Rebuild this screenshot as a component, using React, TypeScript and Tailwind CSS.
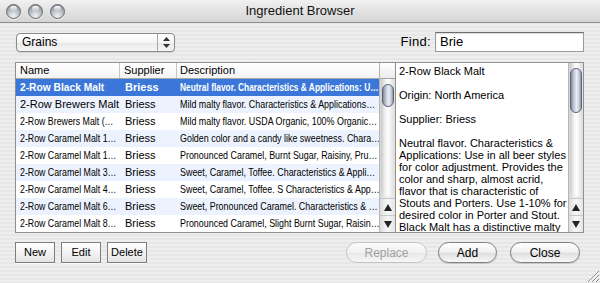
import React from "react";

type Row = { name: string; nameCond?: boolean; desc: string };

const rows: Row[] = [
  { name: "2-Row Black Malt", desc: "Neutral flavor. Characteristics & Applications: U…" },
  { name: "2-Row Brewers Malt", desc: "Mild malty flavor. Characteristics & Applications…" },
  { name: "2-Row Brewers Malt (…", nameCond: true, desc: "Mild malty flavor. USDA Organic, 100% Organic…" },
  { name: "2-Row Caramel Malt 1…", nameCond: true, desc: "Golden color and a candy like sweetness. Chara…" },
  { name: "2-Row Caramel Malt 1…", nameCond: true, desc: "Pronounced Caramel, Burnt Sugar, Raisiny, Pru…" },
  { name: "2-Row Caramel Malt 3…", nameCond: true, desc: "Sweet, Caramel, Toffee. Characteristics & Appli…" },
  { name: "2-Row Caramel Malt 4…", nameCond: true, desc: "Sweet, Caramel, Toffee. S Characteristics & App…" },
  { name: "2-Row Caramel Malt 6…", nameCond: true, desc: "Sweet, Pronounced Caramel. Characteristics & …" },
  { name: "2-Row Caramel Malt 8…", nameCond: true, desc: "Pronounced Caramel, Slight Burnt Sugar, Raisin…" },
];

const detailLines = [
  "2-Row Black Malt",
  "",
  "Origin: North America",
  "",
  "Supplier: Briess",
  "",
  "Neutral flavor. Characteristics &",
  "Applications: Use in all beer styles",
  "for color adjustment. Provides the",
  "color and sharp, almost acrid,",
  "flavor that is characteristic of",
  "Stouts and Porters. Use 1-10% for",
  "desired color in Porter and Stout.",
  "Black Malt has a distinctive malty",
];

function TrafficLight() {
  return (
    <div className="relative w-[15px] h-[15px] rounded-full border border-[#666b72] bg-[radial-gradient(circle_at_50%_85%,#f2f4f6_0%,#c2c7cd_40%,#8d939b_80%,#7a8088_100%)] shadow-[0_1px_0_rgba(255,255,255,0.6)]">
      <div className="absolute left-[3px] top-[1px] w-[7px] h-[5px] rounded-full bg-[linear-gradient(180deg,#ffffff,rgba(255,255,255,0.1))]" />
    </div>
  );
}

function Thumb({ h }: { h: number }) {
  return (
    <div
      className="mx-auto w-[12px] rounded-full border border-[#5d6575] bg-[linear-gradient(90deg,#7e889a_0%,#b9c2d1_25%,#e9edf4_55%,#c9d0dc_80%,#8c95a6_100%)]"
      style={{ height: h }}
    />
  );
}

function Arrows() {
  return (
    <div className="flex flex-col">
      <div className="h-[17px] flex items-center justify-center border-t border-[#c8c8c8] bg-[linear-gradient(90deg,#dcdcdc,#f7f7f7_50%,#e6e6e6)]">
        <svg width="8" height="7" viewBox="0 0 8 7">
          <polygon points="4,0 8,7 0,7" fill="#222" />
        </svg>
      </div>
      <div className="h-[17px] flex items-center justify-center border-t border-[#c8c8c8] bg-[linear-gradient(90deg,#dcdcdc,#f7f7f7_50%,#e6e6e6)]">
        <svg width="8" height="7" viewBox="0 0 8 7">
          <polygon points="0,0 8,0 4,7" fill="#222" />
        </svg>
      </div>
    </div>
  );
}

function Scrollbar({ thumbTop, thumbH }: { thumbTop: number; thumbH: number }) {
  return (
    <div className="flex-1 flex flex-col bg-[linear-gradient(90deg,#d6d6d6,#f2f2f2_50%,#e2e2e2)]">
      <div className="flex-1 mx-[1px] rounded-b-full bg-[linear-gradient(90deg,#c9c9c9,#efefef_30%,#ffffff_55%,#dedede)]">
        <div style={{ height: thumbTop }} />
        <Thumb h={thumbH} />
      </div>
      <div className="h-[2px]" />
      <Arrows />
    </div>
  );
}

function SmallButton({ label }: { label: string }) {
  return (
    <div className="w-[40px] h-[21px] flex items-center justify-center border border-[#7d7d7d] bg-[linear-gradient(180deg,#ffffff,#f3f3f3_50%,#e4e4e4)] text-[11px] text-black shadow-[0_1px_0_rgba(255,255,255,0.7)]">
      {label}
    </div>
  );
}

function AquaButton({ label, w, disabled }: { label: string; w: number; disabled?: boolean }) {
  return (
    <div
      className={
        disabled
          ? "h-[21px] flex items-center justify-center rounded-full border border-[#c4c4c4] bg-[linear-gradient(180deg,#fbfbfb,#f1f1f1_50%,#e9e9e9_55%,#f6f6f6)] text-[12px] text-[#a0a0a0]"
          : "h-[21px] flex items-center justify-center rounded-full border border-[#7f7f7f] bg-[linear-gradient(180deg,#ffffff,#f2f2f2_45%,#e0e0e0_55%,#f8f8f8)] text-[12px] text-black shadow-[0_1px_1px_rgba(0,0,0,0.15)]"
      }
      style={{ width: w }}
    >
      {label}
    </div>
  );
}

export default function App() {
  return (
    <div className="relative w-[600px] h-[283px] overflow-hidden flex flex-col font-['Liberation_Sans',Arial,sans-serif] text-black bg-[repeating-linear-gradient(180deg,#eeeeee_0px,#eeeeee_2px,#e7e7e7_2px,#e7e7e7_4px)]">
      {/* Title bar */}
      <div className="relative h-[23px] shrink-0 flex items-center border-b border-[#8d8d8d] bg-[linear-gradient(180deg,#f1f1f1,#e2e2e2_50%,#d5d5d5)]">
        <div className="flex items-center gap-[7px] pl-[6px]">
          <TrafficLight />
          <TrafficLight />
          <TrafficLight />
        </div>
        <div className="absolute inset-0 flex items-center justify-center text-[13px] text-[#111]">
          Ingredient Browser
        </div>
      </div>

      {/* Toolbar */}
      <div className="mt-[9px] h-[20px] shrink-0 flex items-center justify-between pl-[16px] pr-[16px]">
        <div className="w-[159px] h-[19px] flex rounded-[4px] border border-[#8a8a8a] bg-[linear-gradient(180deg,#ffffff,#f5f5f5_50%,#e8e8e8_55%,#f7f7f7)] shadow-[0_1px_1px_rgba(0,0,0,0.12)]">
          <div className="flex-1 flex items-center pl-[5px] text-[12px]">Grains</div>
          <div className="w-[17px] flex items-center justify-center border-l border-[#a8a8a8]">
            <svg width="7" height="11" viewBox="0 0 7 11">
              <polygon points="3.5,0 7,4 0,4" fill="#333" />
              <polygon points="0,7 7,7 3.5,11" fill="#333" />
            </svg>
          </div>
        </div>
        <div className="flex items-center gap-[4px]">
          <span className="text-[13px] tracking-[0.3px]">Find:</span>
          <div className="w-[149px] h-[20px] flex items-center pl-[4px] bg-white border border-[#9a9a9a] border-t-[#6e6e6e] shadow-[inset_0_1px_1px_rgba(0,0,0,0.15)] text-[13px]">
            Brie
          </div>
        </div>
      </div>

      {/* Main area */}
      <div className="mt-[10px] h-[171px] shrink-0 flex pl-[15px] pr-[16px]">
        {/* Table */}
        <div className="w-[380px] flex border-l border-t border-b border-[#8f8f8f] bg-white">
          <div className="w-[363px] flex flex-col">
            <div className="h-[16px] flex border-b border-[#a6a6a6] bg-[linear-gradient(180deg,#ffffff,#f4f4f4)] text-[11px]">
              <div className="w-[104px] pl-[4px] flex items-center border-r border-[#c6c6c6]">Name</div>
              <div className="w-[57px] pl-[4px] flex items-center border-r border-[#c6c6c6]">Supplier</div>
              <div className="flex-1 pl-[3px] flex items-center">Description</div>
            </div>
            {rows.map((r, i) => {
              const sel = i === 0;
              const bg = sel ? "bg-[#3a77d8] text-white font-bold" : i % 2 === 1 ? "bg-[#edf3fe]" : "bg-white";
              return (
                <div key={i} className={"h-[17px] flex text-[11px] " + bg}>
                  <div className="w-[104px] pl-[4px] flex items-center overflow-hidden whitespace-nowrap">
                    {r.nameCond ? (
                      <span className="inline-block origin-left scale-x-[0.8]">{r.name}</span>
                    ) : (
                      <span className={sel ? "inline-block origin-left scale-x-[0.93]" : ""}>{r.name}</span>
                    )}
                  </div>
                  <div className="w-[57px] pl-[5px] flex items-center overflow-hidden whitespace-nowrap">Briess</div>
                  <div className="flex-1 pl-[3px] flex items-center overflow-hidden whitespace-nowrap">
                    <span className={sel ? "inline-block origin-left scale-x-[0.76]" : "inline-block origin-left scale-x-[0.81]"}>
                      {r.desc}
                    </span>
                  </div>
                </div>
              );
            })}
          </div>
          <div className="w-[16px] flex flex-col border-l border-[#b5b5b5]">
            <div className="h-[16px] shrink-0 border-b border-[#a6a6a6] bg-[linear-gradient(180deg,#ffffff,#ececec)]" />
            <Scrollbar thumbTop={5} thumbH={23} />
          </div>
        </div>

        {/* Detail text view */}
        <div className="flex-1 flex border border-[#8f8f8f] bg-white">
          <div className="flex-1 pl-[3px] pt-[2px] text-[11px] leading-[12px] overflow-hidden whitespace-nowrap">
            {detailLines.map((l, i) => (
              <div key={i} className="h-[12px]">
                {l}
              </div>
            ))}
          </div>
          <div className="w-[15px] flex flex-col border-l border-[#b5b5b5]">
            <Scrollbar thumbTop={5} thumbH={45} />
          </div>
        </div>
      </div>

      {/* Bottom buttons */}
      <div className="mt-[9px] flex items-center justify-between pl-[15px] pr-[20px]">
        <div className="flex gap-[6px]">
          <SmallButton label="New" />
          <SmallButton label="Edit" />
          <SmallButton label="Delete" />
        </div>
        <div className="flex items-center">
          <AquaButton label="Replace" w={81} disabled />
          <div className="w-[11px]" />
          <AquaButton label="Add" w={59} />
          <div className="w-[13px]" />
          <AquaButton label="Close" w={70} />
        </div>
      </div>

      {/* Resize grip */}
      <svg className="absolute right-[1px] bottom-[1px]" width="13" height="13" viewBox="0 0 13 13">
        <line x1="13" y1="2" x2="2" y2="13" stroke="#8a8a8a" strokeWidth="1" />
        <line x1="13" y1="3" x2="3" y2="13" stroke="#ffffff" strokeWidth="1" />
        <line x1="13" y1="6" x2="6" y2="13" stroke="#8a8a8a" strokeWidth="1" />
        <line x1="13" y1="7" x2="7" y2="13" stroke="#ffffff" strokeWidth="1" />
        <line x1="13" y1="10" x2="10" y2="13" stroke="#8a8a8a" strokeWidth="1" />
      </svg>
    </div>
  );
}
